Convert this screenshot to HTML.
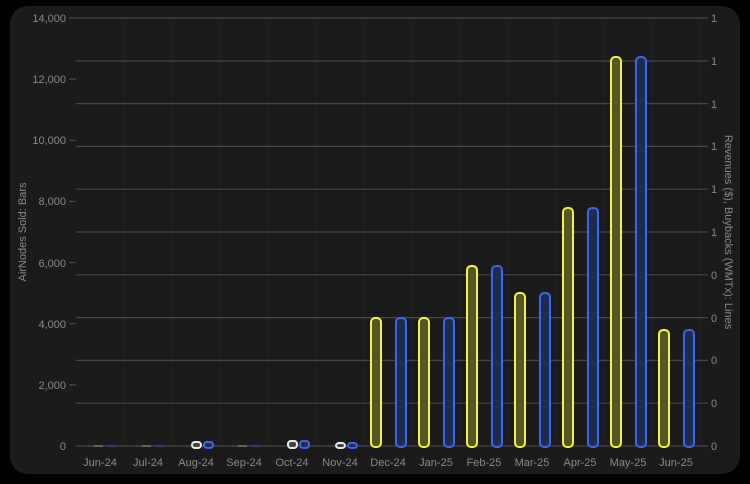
<!DOCTYPE html><html><head><style>body{margin:0;background:#000;width:750px;height:484px;overflow:hidden}
text{font-family:"Liberation Sans",sans-serif;font-size:11px;fill:#8a8a8a}</style></head><body>
<svg width="750" height="484" xmlns="http://www.w3.org/2000/svg" style="display:block">
<rect x="10" y="6" width="730" height="468" rx="18" fill="#1b1b1b"/>
<g stroke="#222" stroke-width="1">
<line x1="124" y1="18" x2="124" y2="446"/><line x1="172" y1="18" x2="172" y2="446"/><line x1="220" y1="18" x2="220" y2="446"/><line x1="268" y1="18" x2="268" y2="446"/><line x1="316" y1="18" x2="316" y2="446"/><line x1="364" y1="18" x2="364" y2="446"/><line x1="412" y1="18" x2="412" y2="446"/><line x1="460" y1="18" x2="460" y2="446"/><line x1="508" y1="18" x2="508" y2="446"/><line x1="556" y1="18" x2="556" y2="446"/><line x1="604" y1="18" x2="604" y2="446"/><line x1="652" y1="18" x2="652" y2="446"/><line x1="700" y1="18" x2="700" y2="446"/>
</g>
<g stroke="#4a4a4a" stroke-width="1.2">
<line x1="76" y1="18" x2="708" y2="18"/><line x1="76" y1="61" x2="708" y2="61"/><line x1="76" y1="103.6" x2="708" y2="103.6"/><line x1="76" y1="146.4" x2="708" y2="146.4"/><line x1="76" y1="189.2" x2="708" y2="189.2"/><line x1="76" y1="232" x2="708" y2="232"/><line x1="76" y1="274.8" x2="708" y2="274.8"/><line x1="76" y1="317.6" x2="708" y2="317.6"/><line x1="76" y1="360.4" x2="708" y2="360.4"/><line x1="76" y1="403.2" x2="708" y2="403.2"/><line x1="76" y1="446" x2="708" y2="446"/>
<line x1="69" y1="18" x2="76" y2="18"/><line x1="69" y1="79.1" x2="76" y2="79.1"/><line x1="69" y1="140.3" x2="76" y2="140.3"/><line x1="69" y1="201.4" x2="76" y2="201.4"/><line x1="69" y1="262.6" x2="76" y2="262.6"/><line x1="69" y1="323.7" x2="76" y2="323.7"/><line x1="69" y1="384.9" x2="76" y2="384.9"/>
</g>
<g text-anchor="end">
<text x="66" y="22">14,000</text><text x="66" y="83">12,000</text><text x="66" y="144">10,000</text><text x="66" y="205">8,000</text><text x="66" y="267">6,000</text><text x="66" y="328">4,000</text><text x="66" y="389">2,000</text><text x="66" y="450">0</text>
</g>
<g>
<text x="711" y="22">1</text><text x="711" y="65">1</text><text x="711" y="108">1</text><text x="711" y="150">1</text><text x="711" y="193">1</text><text x="711" y="236">1</text><text x="711" y="279">0</text><text x="711" y="322">0</text><text x="711" y="364">0</text><text x="711" y="407">0</text><text x="711" y="450">0</text>
</g>
<g text-anchor="middle">
<text x="100" y="466">Jun-24</text><text x="148" y="466">Jul-24</text><text x="196" y="466">Aug-24</text><text x="244" y="466">Sep-24</text><text x="292" y="466">Oct-24</text><text x="340" y="466">Nov-24</text><text x="388" y="466">Dec-24</text><text x="436" y="466">Jan-25</text><text x="484" y="466">Feb-25</text><text x="532" y="466">Mar-25</text><text x="580" y="466">Apr-25</text><text x="628" y="466">May-25</text><text x="676" y="466">Jun-25</text>
<text transform="translate(26,232) rotate(-90)">AirNodes Sold: Bars</text>
<text transform="translate(725,232) rotate(90)">Revenues ($), Buybacks (WMTx): Lines</text>
</g>
<g stroke-width="1.5">
<line x1="94" y1="446" x2="103" y2="446" stroke="#777"/><line x1="142" y1="446" x2="151" y2="446" stroke="#777"/><line x1="238" y1="446" x2="247" y2="446" stroke="#777"/>
<line x1="107" y1="446" x2="116" y2="446" stroke="#2a4a9a"/><line x1="155" y1="446" x2="164" y2="446" stroke="#2a4a9a"/><line x1="251" y1="446" x2="260" y2="446" stroke="#2a4a9a"/>
</g>
<g stroke-width="2">
<g fill="#55552a" stroke="#f2f24a">
<rect x="371" y="318" width="10" height="129" rx="4"/><rect x="419" y="318" width="10" height="129" rx="4"/><rect x="467" y="266" width="10" height="181" rx="4"/><rect x="515" y="293" width="10" height="154" rx="4"/><rect x="563" y="208" width="10" height="239" rx="4"/><rect x="611" y="57" width="10" height="390" rx="4"/><rect x="659" y="330" width="10" height="117" rx="4"/>
</g>
<g fill="#1f2c50" stroke="#3a68f0">
<rect x="396" y="318" width="10" height="129" rx="4"/><rect x="444" y="318" width="10" height="129" rx="4"/><rect x="492" y="266" width="10" height="181" rx="4"/><rect x="540" y="293" width="10" height="154" rx="4"/><rect x="588" y="208" width="10" height="239" rx="4"/><rect x="636" y="57" width="10" height="390" rx="4"/><rect x="684" y="330" width="10" height="117" rx="4"/>
<rect x="204" y="442" width="9" height="6" rx="3"/><rect x="300" y="441" width="9" height="7" rx="3"/><rect x="348" y="443" width="9" height="5" rx="3"/>
</g>
<g fill="#444" stroke="#e8e8e8">
<rect x="192" y="442" width="9" height="6" rx="3"/><rect x="288" y="441" width="9" height="7" rx="3"/><rect x="336" y="443" width="9" height="5" rx="3"/>
</g>
</g>
</svg></body></html>
